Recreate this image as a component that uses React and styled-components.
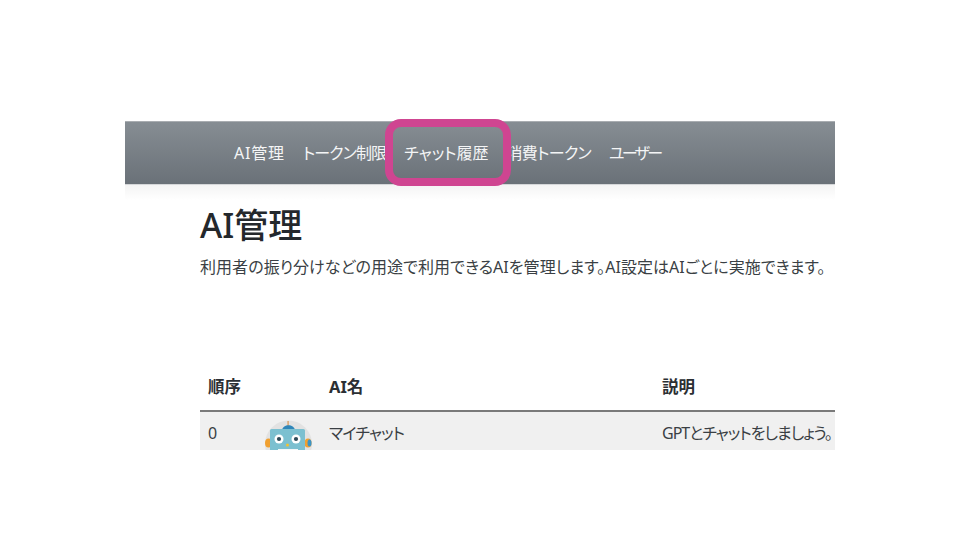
import React from 'react';
import styled, { createGlobalStyle } from 'styled-components';

const GlobalStyle = createGlobalStyle`
	html, body {
		margin : 0;
		padding : 0;
		background : #fff;
		font-family : "Noto Sans", "Noto Sans CJK JP", sans-serif;
		font-feature-settings : "palt";
	}
`;

const Page = styled.div`
	width : 960px;
	height : 540px;
	padding : 121px 0 0 125px;
	box-sizing : border-box;
	overflow : hidden;
`;

const Frame = styled.div`
	position : relative;
	width : 710px;
`;

const NavBar = styled.nav`
	display : flex;
	align-items : center;
	height : 64px;
	padding-left : 109px;
	gap : 18px;
	background : linear-gradient(#868d93, #6a7178);
	border-top : 1px solid #a9adb1;
	border-bottom : 1px solid #d5d7d9;
	box-sizing : border-box;
`;

const NavItem = styled.span`
	font-size : 16px;
	line-height : 20px;
	letter-spacing : ${props => props.$spacing || 0}px;
	color : #f4f5f6;
	white-space : nowrap;
	margin-top : -1px;
`;

const NavHighlight = styled.div`
	position : absolute;
	left : 260px;
	top : -2px;
	width : 126px;
	height : 67px;
	border : 8px solid #cf4591;
	border-radius : 16px;
	box-sizing : border-box;
`;

const Shade = styled.div`
	height : 15px;
	background : linear-gradient(#f4f4f4, #fff);
`;

const Content = styled.main`
	height : 250px;
	padding-left : 75px;
	overflow : hidden;
`;

const Title = styled.h1`
	margin : 2px 0 0;
	font-size : 34px;
	line-height : 46px;
	font-weight : 500;
	color : #24282c;
`;

const Description = styled.p`
	margin : 6px 0 0;
	font-size : 16px;
	line-height : 26px;
	letter-spacing : 0.06px;
	color : #3a3f44;
	white-space : nowrap;
`;

const Columns = styled.div`
	display : grid;
	grid-template-columns : 57px 64px 333px 1fr;
`;

const HeadRow = styled(Columns)`
	margin-top : 81px;
	height : 49px;
	align-items : center;
	border-bottom : 2px solid #7a7a7a;
`;

const BodyRow = styled(Columns)`
	height : 40px;
	background : #f0f0f0;
	overflow : hidden;
`;

const HeadCell = styled.div`
	padding-left : 8px;
	font-size : 16.5px;
	font-weight : 700;
	color : #2b2f33;
	white-space : nowrap;
`;

const Cell = styled.div`
	padding : 11px 0 0 8px;
	font-size : 16px;
	line-height : 20px;
	letter-spacing : ${props => props.$spacing || 0}px;
	color : #3a3f44;
	white-space : nowrap;
`;

const AvatarCell = styled.div`
	height : 40px;
`;

function RobotAvatar() {
	return (
		<svg width="64" height="40" viewBox="0 0 64 40">
			<circle cx="31.5" cy="32" r="23.5" fill="#e2e2e2" />
			<rect x="30.4" y="9" width="1.4" height="5" fill="#d9a066" />
			<path d="M25 18 C26 11.5 37 11.5 38 18 Z" fill="#2f86b9" />
			<ellipse cx="11.5" cy="31" rx="3.5" ry="4.5" fill="#f0a030" />
			<ellipse cx="51" cy="31" rx="3.5" ry="4.5" fill="#f0a030" />
			<ellipse cx="52.5" cy="31" rx="2" ry="3.5" fill="#3d93c4" />
			<rect x="13" y="17" width="35" height="23" rx="1.5" fill="#7cc0d0" />
			<circle cx="22" cy="27" r="4.5" fill="#fff" />
			<circle cx="39" cy="27" r="4.5" fill="#fff" />
			<circle cx="22" cy="27" r="2.1" fill="#2e4a58" />
			<circle cx="39" cy="27" r="2.1" fill="#2e4a58" />
			<circle cx="30.5" cy="33" r="1.5" fill="#f2c230" />
			<rect x="21" y="37" width="20" height="3" fill="#f4f8f8" />
		</svg>
	);
}

function App() {
	return (
		<>
			<GlobalStyle />
			<Page>
				<Frame>
					<NavBar>
						<NavItem $spacing={0.8}>AI管理</NavItem>
						<NavItem $spacing={-0.9}>トークン制限</NavItem>
						<NavItem>チャット履歴</NavItem>
						<NavItem $spacing={-0.7}>消費トークン</NavItem>
						<NavItem $spacing={-2.7}>ユーザー</NavItem>
					</NavBar>
					<NavHighlight />
					<Shade />
					<Content>
						<Title>AI管理</Title>
						<Description>利用者の振り分けなどの用途で利用できるAIを管理します。AI設定はAIごとに実施できます。</Description>
						<HeadRow>
							<HeadCell>順序</HeadCell>
							<HeadCell />
							<HeadCell>AI名</HeadCell>
							<HeadCell>説明</HeadCell>
						</HeadRow>
						<BodyRow>
							<Cell>0</Cell>
							<AvatarCell><RobotAvatar /></AvatarCell>
							<Cell $spacing={-1}>マイチャット</Cell>
							<Cell $spacing={-1}>GPTとチャットをしましょう。</Cell>
						</BodyRow>
					</Content>
				</Frame>
			</Page>
		</>
	);
}

export default App;
